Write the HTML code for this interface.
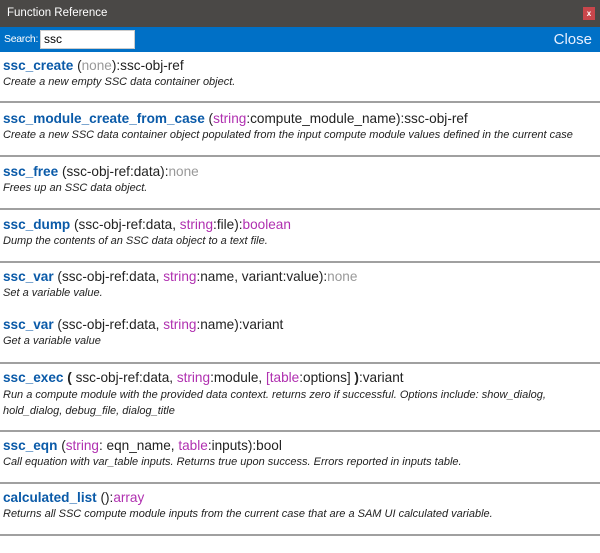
<!DOCTYPE html>
<html><head><meta charset="utf-8"><style>
*{margin:0;padding:0;box-sizing:border-box}
body{width:600px;height:553px;background:#fff;font-family:"Liberation Sans","DejaVu Sans",sans-serif;position:relative;overflow:hidden}
.tb{position:absolute;left:0;top:0;width:600px;height:27px;background:#4a4846;color:#fff;font-size:11.5px;line-height:27px;padding-left:7px}
.x{position:absolute;right:5px;top:7px;width:12px;height:13px;background:#c8464b;color:#fff;font-size:8px;line-height:13px;text-align:center;font-weight:bold}
.sb{position:absolute;left:0;top:27px;width:600px;height:25px;background:#0070c6;color:#fff}
.sl{position:absolute;left:4px;top:0;line-height:25px;font-size:10.5px;letter-spacing:-0.3px}
.in{position:absolute;left:40px;top:30px;width:95px;height:19px;background:#fff;border:1px solid #ccc;font-size:12px;line-height:17px;padding-left:3px;color:#000}
.cl{position:absolute;right:8px;top:4px;font-size:15px;color:#e8f0ff}
.t{position:absolute;left:3px;font-size:13.6px;color:#222;white-space:nowrap}
.t b{color:#0a5aa8}
.g{color:#999}.p{color:#b030b0}
.d{position:absolute;left:3px;font-size:11px;font-style:italic;color:#222;white-space:nowrap;line-height:16px}
.l{position:absolute;left:0;width:600px;height:2px;background:#a0a0a0}
</style></head><body>
<div class="tb">Function Reference</div><div class="x">x</div>
<div class="sb"><span class="sl">Search:</span><span class="cl">Close</span></div>
<div class="in">ssc</div>

<div class="t" style="top:58px"><b>ssc_create</b> (<span class="g">none</span>):ssc-obj-ref</div>
<div class="d" style="top:74px">Create a new empty SSC data container object.</div>
<div class="l" style="top:101px"></div>

<div class="t" style="top:111px"><b>ssc_module_create_from_case</b> (<span class="p">string</span>:compute_module_name):ssc-obj-ref</div>
<div class="d" style="top:127px">Create a new SSC data container object populated from the input compute module values defined in the current case</div>
<div class="l" style="top:155px"></div>

<div class="t" style="top:164px"><b>ssc_free</b> (ssc-obj-ref:data):<span class="g">none</span></div>
<div class="d" style="top:180px">Frees up an SSC data object.</div>
<div class="l" style="top:208px"></div>

<div class="t" style="top:217px"><b>ssc_dump</b> (ssc-obj-ref:data, <span class="p">string</span>:file):<span class="p">boolean</span></div>
<div class="d" style="top:233px">Dump the contents of an SSC data object to a text file.</div>
<div class="l" style="top:261px"></div>

<div class="t" style="top:269px"><b>ssc_var</b> (ssc-obj-ref:data, <span class="p">string</span>:name, variant:value):<span class="g">none</span></div>
<div class="d" style="top:285px">Set a variable value.</div>

<div class="t" style="top:317px"><b>ssc_var</b> (ssc-obj-ref:data, <span class="p">string</span>:name):variant</div>
<div class="d" style="top:333px">Get a variable value</div>
<div class="l" style="top:362px"></div>

<div class="t" style="top:370px"><b>ssc_exec</b> <b style="color:#222">(</b> ssc-obj-ref:data, <span class="p">string</span>:module, <span class="p">[table</span>:options] <b style="color:#222">)</b>:variant</div>
<div class="d" style="top:387px">Run a compute module with the provided data context. returns zero if successful. Options include: show_dialog,<br>hold_dialog, debug_file, dialog_title</div>
<div class="l" style="top:430px"></div>

<div class="t" style="top:438px"><b>ssc_eqn</b> (<span class="p">string</span>: eqn_name, <span class="p">table</span>:inputs):bool</div>
<div class="d" style="top:454px">Call equation with var_table inputs. Returns true upon success. Errors reported in inputs table.</div>
<div class="l" style="top:482px"></div>

<div class="t" style="top:490px"><b>calculated_list</b> ():<span class="p">array</span></div>
<div class="d" style="top:506px">Returns all SSC compute module inputs from the current case that are a SAM UI calculated variable.</div>
<div class="l" style="top:534px"></div>
</body></html>
